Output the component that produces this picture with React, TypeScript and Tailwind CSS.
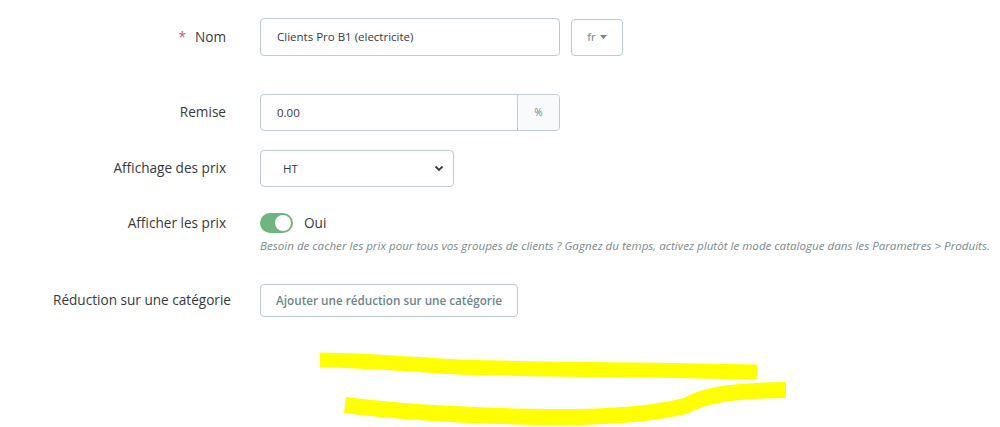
import React from "react";

export default function App() {
  const font = { fontFamily: '"Open Sans", "Noto Sans", sans-serif' };
  return (
    <div className="relative w-[1000px] h-[427px] bg-white overflow-hidden text-[#363a41]" style={font}>
      <div className="flex flex-col pt-[18px]">
        {/* Nom */}
        <div className="flex items-center h-[38px]">
          <div className="w-[226px] flex justify-end text-[13.6px]">
            <span className="text-[#c05c67] mr-[9px]">*</span>
            <span>Nom</span>
          </div>
          <div className="ml-[34px] flex items-center gap-[11px]">
            <div className="w-[300px] h-[38px] border border-[#bbcdd2] rounded-[4px] flex items-center pl-[16px] text-[11.5px]">
              Clients Pro B1 (electricite)
            </div>
            <div className="w-[52px] h-[37px] border border-[#bbcdd2] rounded-[4px] flex items-center justify-center text-[11.5px] text-[#6c868e] gap-[4px]">
              <span>fr</span>
              <svg width="7" height="4" viewBox="0 0 7 4"><path d="M0 0h7L3.5 4z" fill="#6c868e" /></svg>
            </div>
          </div>
        </div>

        {/* Remise */}
        <div className="flex items-center h-[37px] mt-[38px]">
          <div className="w-[226px] text-right text-[13.6px]">Remise</div>
          <div className="ml-[34px] w-[300px] h-[37px] border border-[#bbcdd2] rounded-[4px] flex">
            <div className="flex-1 flex items-center pl-[16px] text-[11.5px]">0.00</div>
            <div className="w-[42px] border-l border-[#bbcdd2] bg-[#f8fafb] flex items-center justify-center text-[10px] text-[#6c868e] rounded-r-[4px]">%</div>
          </div>
        </div>

        {/* Affichage des prix */}
        <div className="flex items-center h-[37px] mt-[19px]">
          <div className="w-[226px] text-right text-[13.6px]">Affichage des prix</div>
          <div className="ml-[34px] w-[194px] h-[37px] border border-[#bbcdd2] rounded-[4px] flex items-center justify-between pl-[22px] pr-[9px] text-[11.5px]">
            <span>HT</span>
            <svg width="10" height="7" viewBox="0 0 10 7"><path d="M1.5 1.5L5 5l3.5-3.5" stroke="#363a41" strokeWidth="1.8" fill="none" /></svg>
          </div>
        </div>

        {/* Afficher les prix */}
        <div className="flex items-start mt-[26px]">
          <div className="w-[226px] text-right text-[13.6px] leading-[20px]">Afficher les prix</div>
          <div className="ml-[34px] flex flex-col">
            <div className="flex items-center h-[20px]">
              <div className="w-[33px] h-[20px] rounded-full bg-[#70b580] relative">
                <div className="absolute right-[2px] top-[2px] w-[16px] h-[16px] rounded-full bg-white" />
              </div>
              <span className="ml-[11px] text-[13.6px] text-[#363a41]">Oui</span>
            </div>
            <div className="mt-[6px] text-[11.6px] italic text-[#7a8a8e] leading-[14px] whitespace-nowrap">
              Besoin de cacher les prix pour tous vos groupes de clients ? Gagnez du temps, activez plutôt le mode catalogue dans les Parametres &gt; Produits.
            </div>
          </div>
        </div>

        {/* Réduction */}
        <div className="flex items-center h-[33px] mt-[31px]">
          <div className="w-[226px] flex justify-end text-[13.6px]">
            <span className="mr-[-5px] whitespace-nowrap">Réduction sur une catégorie</span>
          </div>
          <div className="ml-[34px] w-[258px] h-[33px] border border-[#bbcdd2] rounded-[4px] flex items-center justify-center text-[11.7px] font-semibold text-[#6c868e]">
            Ajouter une réduction sur une catégorie
          </div>
        </div>
      </div>

      {/* yellow highlighter strokes */}
      <svg className="absolute left-0 top-0" width="1000" height="427" viewBox="0 0 1000 427">
        <path d="M320 360 C350 360 380 362 440 366 S650 369 757 372" stroke="#ffff00" strokeWidth="15" fill="none" strokeLinecap="butt" />
        <path d="M345 405 C400 412 470 416 545 417 S660 412 685 406 C700 398 715 394 740 392 S770 390 786 390" stroke="#ffff00" strokeWidth="16" fill="none" strokeLinecap="butt" />
      </svg>
    </div>
  );
}
